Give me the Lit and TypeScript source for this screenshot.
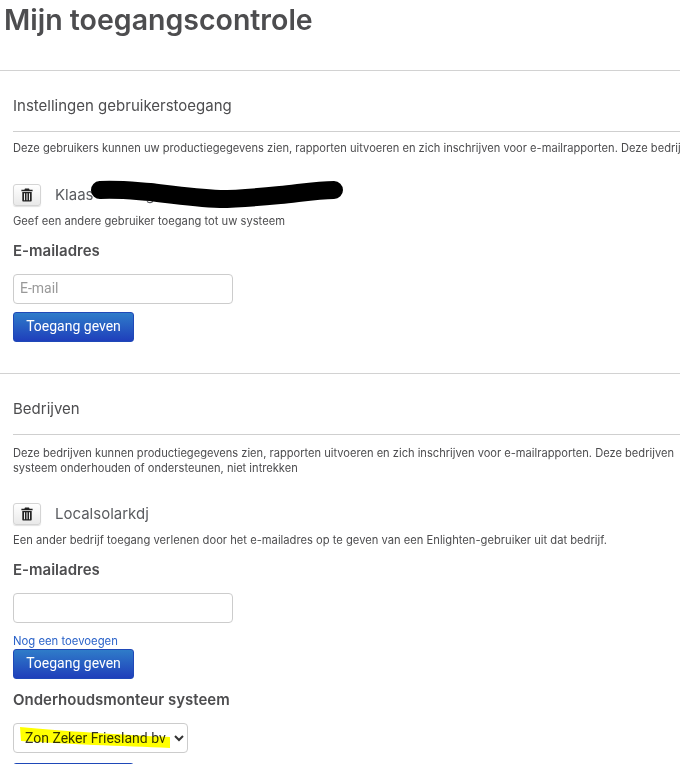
import { LitElement, html, css } from "lit";
import { customElement } from "lit/decorators.js";

const trash = html`<svg class="trash-icon" viewBox="0 0 12 14" width="12" height="14" aria-hidden="true">
  <path fill="#222" d="M4 0.5h4l.6 1.3H11.6v1.4H.4V1.8h3z"/>
  <path fill="#222" fill-rule="evenodd" d="M1.3 4h9.4v8.6c0 .6-.4 1-1 1H2.3c-.6 0-1-.4-1-1zM3 5.3v7h1v-7zm2.5 0v7h1v-7zm2.5 0v7h1v-7z"/>
</svg>`;

@customElement("app-root")
export class AppRoot extends LitElement {
  static styles = css`
    :host { display: block; width: 680px; height: 764px; overflow: hidden; background: #fff; color: #4d4d4f; font-family: Inter, "Liberation Sans", sans-serif; }
    .page { width: 1100px; position: relative; }
    h1 { margin: 0; padding: 3px 0 0 4px; height: 70px; box-sizing: border-box; font-size: 28.5px; line-height: 34px; font-weight: 600; color: #4d4d4f; letter-spacing: 0; }
    .rule { height: 1px; background: #d2d2d2; }
    .section { padding: 24px 0 31px 13px; }
    .section + .section { border-top: 1px solid #d2d2d2; }
    h2 { margin: 0; font-size: 15px; line-height: 22px; font-weight: 400; color: #4d4d4f; }
    .sub { height: 1px; background: #cfcfcf; margin-top: 14px; }
    p { margin: 0; font-size: 11.2px; line-height: 15px; white-space: nowrap; color: #4d4d4f; }
    .intro { margin-top: 9px; font-size: 11.12px; }
    .second .intro { margin-top: 11px; }
    .person { display: flex; align-items: center; gap: 14px; margin-top: 28px; position: relative; }
    .second .person { margin-top: 27px; }
    .trash { width: 28px; height: 22px; box-sizing: border-box; padding: 0; display: flex; align-items: center; justify-content: center; border: 1px solid #d4d4d4; border-radius: 3px; background: linear-gradient(#fff, #e9e9e9); box-shadow: 0 1px 1px rgba(0,0,0,.12); }
    .name { font-size: 15px; line-height: 22px; color: #5a5c60; }
    .hint { margin-top: 8px; }
    .label { margin-top: 11px; font-size: 15px; line-height: 22px; font-weight: 600; color: #4d4d4f; }
    .input { display: block; width: 220px; height: 30px; box-sizing: border-box; margin: 12px 0 0; padding: 0 6px 2px; border: 1px solid #ccc; border-radius: 4px; background: #fff; font-family: Roboto, "Liberation Sans", sans-serif; font-size: 14px; color: #333; outline: none; }
    .input::placeholder { color: #999; opacity: 1; }
    .btn { display: block; width: 121px; height: 30px; box-sizing: border-box; padding: 0 0 2px; border: 1px solid #1f49b8; border-radius: 3px; background: linear-gradient(#2f7cc9, #1f3fbb); color: #fff; font-family: Roboto, "Liberation Sans", sans-serif; font-size: 14px; }
    .mt8 { margin-top: 8px; }
    .link { display: block; margin-top: 10px; font-size: 11.3px; line-height: 16px; color: #2b63c9; text-decoration: none; }
    .scribble { position: absolute; left: 77px; top: -6px; }
    .hidden-g { margin-left: 52px; }
    .select-wrap { position: relative; width: 175px; height: 30px; margin-top: 12px; }
    .select { width: 175px; height: 30px; box-sizing: border-box; padding: 0 0 0 7px; border: 1px solid #ccc; border-radius: 4px; background: #fff; font-family: Roboto, "Liberation Sans", sans-serif; font-size: 14px; color: #333; }
    .mark { position: absolute; left: 0; top: 0; pointer-events: none; mix-blend-mode: multiply; }
    .label.owner { margin-top: 10px; }
    .last { margin-top: 10px; }
  `;

  render() {
    return html`<div class="page">
      <h1>Mijn toegangscontrole</h1>
      <div class="rule"></div>
      <section class="section">
        <h2>Instellingen gebruikerstoegang</h2>
        <div class="sub"></div>
        <p class="intro">Deze gebruikers kunnen uw productiegegevens zien, rapporten uitvoeren en zich inschrijven voor e-mailrapporten. Deze bedrijven</p>
        <div class="person">
          <button class="trash" aria-label="Verwijderen">${trash}</button>
          <span class="name">Klaas<span class="hidden-g">g</span></span>
          <svg class="scribble" width="260" height="40" viewBox="0 0 260 40" aria-hidden="true">
            <path d="M10 12C30 11 45 13 60 14C85 17 105 20 130 21C150 21 170 19 190 17C210 15 228 12 244 12" fill="none" stroke="#000" stroke-width="18" stroke-linecap="round"/>
          </svg>
        </div>
        <p class="hint">Geef een andere gebruiker toegang tot uw systeem</p>
        <div class="label">E-mailadres</div>
        <input class="input" placeholder="E-mail" />
        <button class="btn mt8">Toegang geven</button>
      </section>
      <section class="section second">
        <h2>Bedrijven</h2>
        <div class="sub"></div>
        <p class="intro">Deze bedrijven kunnen productiegegevens zien, rapporten uitvoeren en zich inschrijven voor e-mailrapporten. Deze bedrijven<br />systeem onderhouden of ondersteunen, niet intrekken</p>
        <div class="person">
          <button class="trash" aria-label="Verwijderen">${trash}</button>
          <span class="name">Localsolarkdj</span>
        </div>
        <p class="hint">Een ander bedrijf toegang verlenen door het e-mailadres op te geven van een Enlighten-gebruiker uit dat bedrijf.</p>
        <div class="label">E-mailadres</div>
        <input class="input" />
        <a class="link" href="#">Nog een toevoegen</a>
        <button class="btn">Toegang geven</button>
        <div class="label owner">Onderhoudsmonteur systeem</div>
        <div class="select-wrap">
          <select class="select"><option>Zon Zeker Friesland bv</option></select>
          <svg class="mark" width="175" height="30" viewBox="0 0 175 30" aria-hidden="true">
            <path d="M7 4C50 8 110 12 157 14V25C110 23 50 21 8 18Z" fill="#ffff00"/>
          </svg>
        </div>
        <button class="btn last"></button>
      </section>
    </div>`;
  }
}
